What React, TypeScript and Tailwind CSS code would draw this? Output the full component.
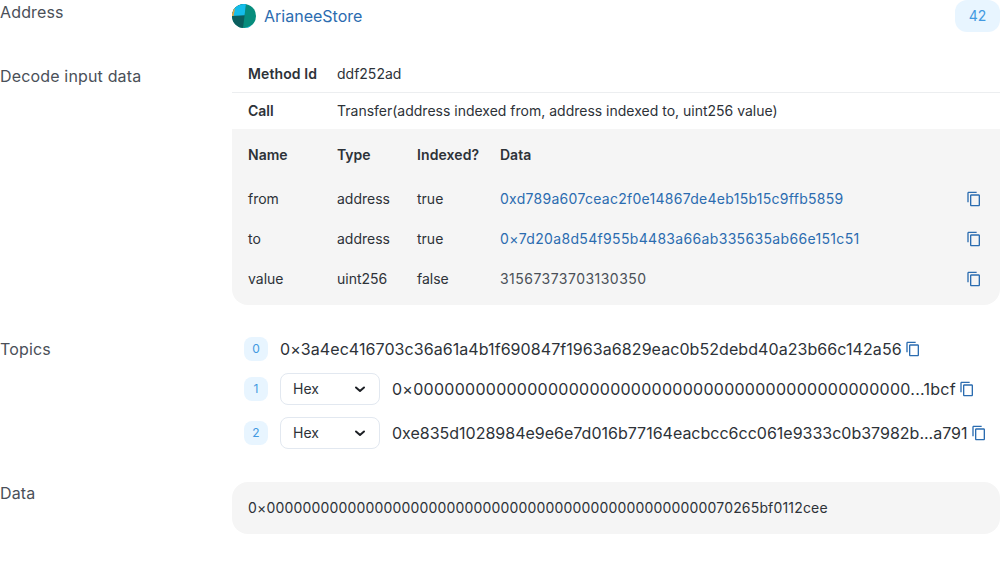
const CopyIcon = () => (
  <svg width="16" height="16" viewBox="0 0 24 24" fill="#2b6cb0" className="shrink-0">
    <path d="M16 1H4c-1.1 0-2 .9-2 2v14h2V3h12V1zm3 4H8c-1.1 0-2 .9-2 2v14c0 1.1.9 2 2 2h11c1.1 0 2-.9 2-2V7c0-1.1-.9-2-2-2zm0 16H8V7h11v14z" />
  </svg>
);

const Badge = ({ text }: any) => (
  <div className="w-6 h-6 shrink-0 rounded-lg bg-[#e8f5ff] text-[#4299e1] text-xs flex items-center justify-center">
    {text}
  </div>
);

const HexSelect = () => (
  <div className="w-[100px] h-8 shrink-0 rounded-lg border border-[#e2e8f0] bg-white pl-3 pr-[13px] flex items-center justify-between text-sm text-[#2d3238]">
    <span>Hex</span>
    <svg width="12" height="12" viewBox="0 0 12 12" fill="none" stroke="#1d2025" strokeWidth="2" strokeLinecap="round" strokeLinejoin="round">
      <path d="M2 4.5l4 3.5 4-3.5" />
    </svg>
  </div>
);

const rows = [
  { name: "from", type: "address", indexed: "true", data: "0xd789a607ceac2f0e14867de4eb15b15c9ffb5859", color: "tracking-[0.28px] text-[#2b6cb0]" },
  { name: "to", type: "address", indexed: "true", data: "0×7d20a8d54f955b4483a66ab335635ab66e151c51", color: "tracking-[0.33px] text-[#2b6cb0]" },
  { name: "value", type: "uint256", indexed: "false", data: "31567373703130350", color: "tracking-[0.47px] text-[#4a5058]" },
];

const topicOne = "0×" + "0".repeat(48) + "...1bcf";
const dataValue = "0×" + "0".repeat(50) + "70265bf0112cee";

export default function App() {
  return (
    <div className="w-[1000px] h-[566px] overflow-hidden bg-white text-[#2d3238] font-['Inter',sans-serif]">
      <div className="flex h-[56px]">
        <div className="w-[232px] shrink-0 text-base text-[#4a5058] leading-6 tracking-[0.01em]">Address</div>
        <div className="flex-1 flex justify-between items-start">
          <div className="flex items-center gap-2 pt-1">
            <svg width="24" height="24" viewBox="0 0 24 24">
              <defs>
                <clipPath id="logo">
                  <circle cx="12" cy="12" r="12" />
                </clipPath>
              </defs>
              <g clipPath="url(#logo)">
                <rect width="24" height="24" fill="#078d7d" />
                <path d="M14 0L11 24H0V0z" fill="#0b5e5e" />
                <path d="M14 0L12.6 11.2L0 12V0z" fill="#14bdea" />
                <path d="M0 5L3 4.5L1.5 12L0 12z" fill="#e8a33d" />
                <path d="M13 24L19 21.5L20 24z" fill="#14bdea" />
              </g>
            </svg>
            <span className="text-base text-[#2b6cb0]">ArianeeStore</span>
          </div>
          <div className="w-[45px] h-8 rounded-xl bg-[#e8f5ff] text-[#4299e1] text-sm flex items-center justify-center">
            42
          </div>
        </div>
      </div>

      <div className="flex h-[249px]">
        <div className="w-[232px] shrink-0 text-base text-[#4a5058] leading-6 pt-2 tracking-[0.01em]">Decode input data</div>
        <div className="flex-1 text-sm">
          <div className="flex items-center h-[37px] border-b border-[#eceef0] pl-4">
            <div className="w-[89px] font-semibold tracking-[0.1px]">Method Id</div>
            <div>ddf252ad</div>
          </div>
          <div className="flex items-center h-[36px] pl-4">
            <div className="w-[89px] font-semibold">Call</div>
            <div>Transfer(address indexed from, address indexed to, uint256 value)</div>
          </div>
          <div className="bg-[#f5f5f5] rounded-b-2xl h-[176px] pl-4 pr-[18px]">
            <div className="flex items-center h-[50px] pt-[2px] font-semibold">
              <div className="w-[89px]">Name</div>
              <div className="w-[80px]">Type</div>
              <div className="w-[83px] tracking-[0.1px]">Indexed?</div>
              <div>Data</div>
            </div>
            {rows.map((row) => (
              <div key={row.name} className="flex items-center h-10">
                <div className="w-[89px]">{row.name}</div>
                <div className="w-[80px]">{row.type}</div>
                <div className="w-[83px]">{row.indexed}</div>
                <div className={"flex-1 " + row.color}>{row.data}</div>
                <CopyIcon />
              </div>
            ))}
          </div>
        </div>
      </div>

      <div className="flex mt-[32px]">
        <div className="w-[232px] shrink-0 text-base text-[#4a5058] leading-6 tracking-[0.01em]">Topics</div>
        <div className="flex-1 flex flex-col pl-3">
          <div className="flex items-center h-6 gap-3">
            <Badge text="0" />
            <div className="flex items-center gap-[3px]">
              <span className="tracking-[0.07px]">0×3a4ec416703c36a61a4b1f690847f1963a6829eac0b52debd40a23b66c142a56</span>
              <CopyIcon />
            </div>
          </div>
          <div className="flex items-center h-8 gap-3 mt-3">
            <Badge text="1" />
            <HexSelect />
            <div className="flex items-center gap-[3px]">
              <span className="tracking-[0.27px]">{topicOne}</span>
              <CopyIcon />
            </div>
          </div>
          <div className="flex items-center h-8 gap-3 mt-3">
            <Badge text="2" />
            <HexSelect />
            <div className="flex items-center gap-[3px]">
              <span>0xe835d1028984e9e6e7d016b77164eacbcc6cc061e9333c0b37982b...a791</span>
              <CopyIcon />
            </div>
          </div>
        </div>
      </div>

      <div className="flex mt-[33px]">
        <div className="w-[232px] shrink-0 text-base text-[#4a5058] leading-6 -mt-px tracking-[0.01em]">Data</div>
        <div className="flex-1 h-[52px] rounded-2xl bg-[#f5f5f5] flex items-center px-4 text-sm tracking-[0.17px]">
          {dataValue}
        </div>
      </div>
    </div>
  );
}
